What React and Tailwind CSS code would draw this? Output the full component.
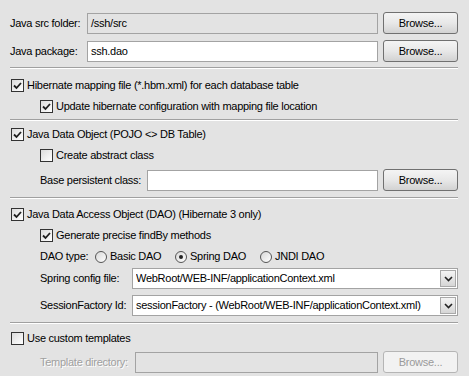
import { useState } from "react";

const font = { fontFamily: '"Liberation Sans", Arial, sans-serif' };

function Check({ checked, onChange, label, disabled }) {
  return (
    <label className="flex items-center h-[21px] cursor-default select-none">
      <span
        onClick={onChange}
        className="relative w-[13px] h-[13px] border border-[#333] bg-gradient-to-br from-[#dcdcdc] to-[#ffffff] flex items-center justify-center shrink-0"
      >
        {checked && (
          <svg width="11" height="11" viewBox="0 0 11 11">
            <polyline points="2,5.5 4.5,8 9,3" fill="none" stroke="#1f1f1f" strokeWidth="1.8" />
          </svg>
        )}
      </span>
      <span className={`ml-[3px] ${disabled ? "text-[#a0a0a0]" : "text-black"}`}>{label}</span>
    </label>
  );
}

function Radio({ checked, label, onClick, width }) {
  return (
    <span className={`flex items-center ${width}`} onClick={onClick}>
      <span className="w-[12px] h-[12px] rounded-full border border-[#555] bg-gradient-to-br from-[#d8d8d8] to-[#ffffff] flex items-center justify-center shrink-0">
        {checked && <span className="w-[4px] h-[4px] rounded-full bg-[#222]" />}
      </span>
      <span className="ml-[3px]">{label}</span>
    </span>
  );
}

function Field({ value, readOnly, disabled }) {
  return (
    <div
      className={`flex-1 h-[21px] border border-[#a3a3a3] flex items-center pl-[3px] ${
        readOnly || disabled ? "bg-[#e3e3e3]" : "bg-white"
      }`}
    >
      {value}
    </div>
  );
}

function Browse({ disabled }) {
  return (
    <div
      className={`w-[75px] h-[22px] ml-[5px] rounded-[3px] border flex items-center justify-center shrink-0 ${
        disabled
          ? "border-[#b5b5b5] bg-[#f2f2f2] text-[#9a9a9a]"
          : "border-[#707070] bg-gradient-to-b from-[#f4f4f4] via-[#e8e8e8] to-[#d2d2d2] text-black"
      }`}
    >
      Browse...
    </div>
  );
}

function Combo({ value }) {
  return (
    <div className="flex-1 h-[21px] border border-[#a3a3a3] bg-white flex items-center pl-[3px] relative">
      <span className="flex-1 truncate">{value}</span>
      <span className="w-[16px] h-[17px] mr-[1px] border border-[#a9a9a9] bg-gradient-to-b from-[#f4f4f4] to-[#d6d6d6] flex items-center justify-center">
        <svg width="9" height="6" viewBox="0 0 9 6">
          <polyline points="1,1 4.5,4.5 8,1" fill="none" stroke="#222" strokeWidth="1.6" />
        </svg>
      </span>
    </div>
  );
}

function Separator({ className }) {
  return <div className={`h-[2px] border-t border-[#a0a0a0] border-b border-b-white ${className}`} />;
}

export default function App() {
  const [hbm, setHbm] = useState(true);
  const [updateCfg, setUpdateCfg] = useState(true);
  const [pojo, setPojo] = useState(true);
  const [abstractCls, setAbstractCls] = useState(false);
  const [dao, setDao] = useState(true);
  const [findBy, setFindBy] = useState(true);
  const [daoType, setDaoType] = useState("spring");
  const [custom, setCustom] = useState(false);

  return (
    <div
      style={font}
      className="w-[469px] h-[376px] overflow-hidden bg-[#e3e3e3] text-[11px] tracking-[-0.27px] text-black pt-[12px] pl-[10px] pr-[11px] leading-none"
    >
      <div className="flex items-center h-[22px]">
        <span className="w-[77px] shrink-0">Java src folder:</span>
        <Field value="/ssh/src" readOnly />
        <Browse />
      </div>
      <div className="flex items-center h-[22px] mt-[6px]">
        <span className="w-[77px] shrink-0">Java package:</span>
        <Field value="ssh.dao" />
        <Browse />
      </div>

      <Separator className="mt-[5px]" />

      <div className="pl-[1px] mt-[6px]">
        <Check checked={hbm} onChange={() => setHbm(!hbm)} label="Hibernate mapping file (*.hbm.xml) for each database table" />
        <div className="pl-[29px]">
          <Check checked={updateCfg} onChange={() => setUpdateCfg(!updateCfg)} label="Update hibernate configuration with mapping file location" />
        </div>
      </div>

      <Separator className="mt-[2px]" />

      <div className="pl-[1px] mt-[3px]">
        <Check checked={pojo} onChange={() => setPojo(!pojo)} label="Java Data Object (POJO <> DB Table)" />
        <div className="pl-[29px]">
          <Check checked={abstractCls} onChange={() => setAbstractCls(!abstractCls)} label="Create abstract class" />
        </div>
      </div>
      <div className="flex items-center h-[22px] mt-[3px] pl-[30px]">
        <span className="w-[107px] shrink-0">Base persistent class:</span>
        <Field value="" />
        <Browse />
      </div>

      <Separator className="mt-[6px]" />

      <div className="pl-[1px] mt-[5px]">
        <Check checked={dao} onChange={() => setDao(!dao)} label="Java Data Access Object (DAO) (Hibernate 3 only)" />
        <div className="pl-[29px]">
          <Check checked={findBy} onChange={() => setFindBy(!findBy)} label="Generate precise findBy methods" />
        </div>
      </div>
      <div className="flex items-center h-[21px] pl-[30px]">
        <span className="w-[55px] shrink-0">DAO type:</span>
        <Radio width="w-[80px]" label="Basic DAO" checked={daoType === "basic"} onClick={() => setDaoType("basic")} />
        <Radio width="w-[85px]" label="Spring DAO" checked={daoType === "spring"} onClick={() => setDaoType("spring")} />
        <Radio width="w-[80px]" label="JNDI DAO" checked={daoType === "jndi"} onClick={() => setDaoType("jndi")} />
      </div>
      <div className="flex items-center h-[21px] mt-[1px] pl-[30px]">
        <span className="w-[92px] shrink-0">Spring config file:</span>
        <Combo value="WebRoot/WEB-INF/applicationContext.xml" />
      </div>
      <div className="flex items-center h-[21px] mt-[6px] pl-[30px]">
        <span className="w-[92px] shrink-0">SessionFactory Id:</span>
        <Combo value="sessionFactory - (WebRoot/WEB-INF/applicationContext.xml)" />
      </div>

      <Separator className="mt-[6px]" />

      <div className="pl-[1px] mt-[4px]">
        <Check checked={custom} onChange={() => setCustom(!custom)} label="Use custom templates" />
      </div>
      <div className="flex items-center h-[22px] mt-[2px] pl-[30px]">
        <span className="w-[95px] shrink-0 text-[#a0a0a0] [text-shadow:1px_1px_0_#fff]">Template directory:</span>
        <Field value="" disabled />
        <Browse disabled />
      </div>
    </div>
  );
}
